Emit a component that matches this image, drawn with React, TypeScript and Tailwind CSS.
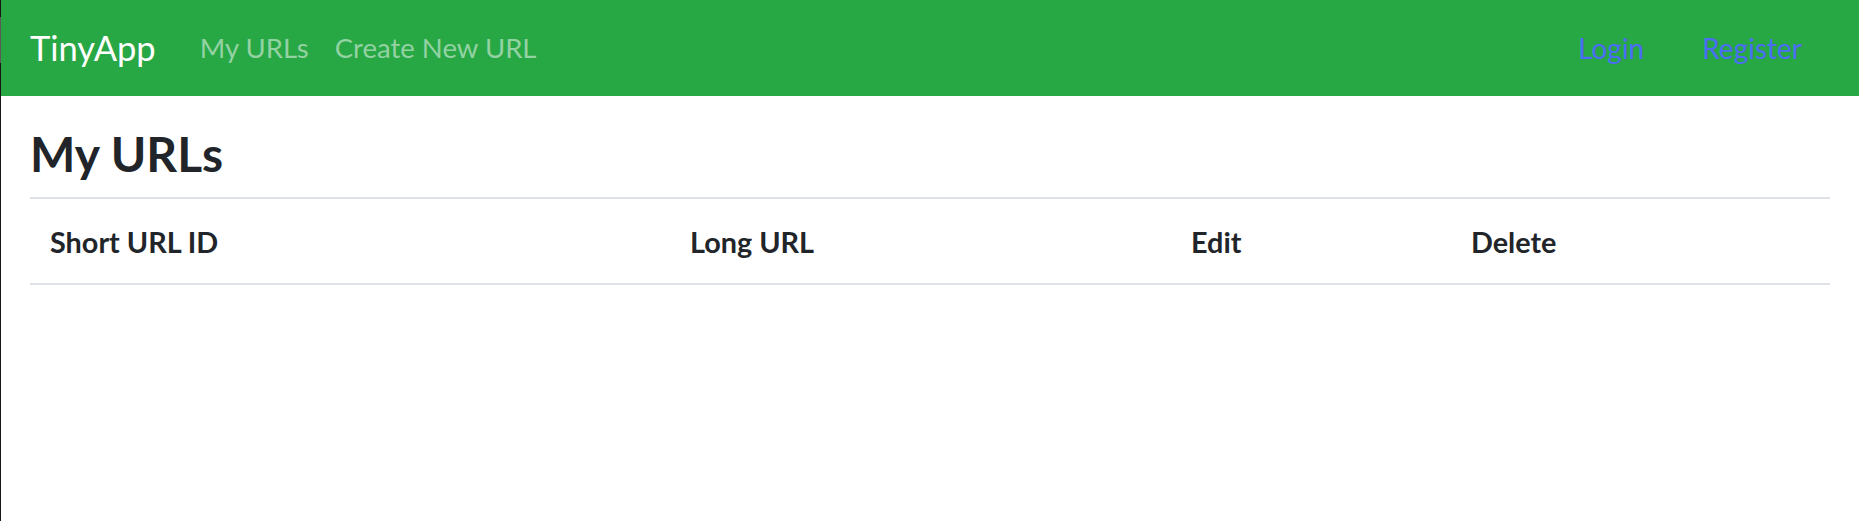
import React from 'react';

const columns = [
  { label: 'Short URL ID' },
  { label: 'Long URL' },
  { label: 'Edit' },
  { label: 'Delete' },
];

export default function App() {
  return (
    <div
      className="relative min-h-[521px] bg-white border-l border-[#161616]"
      style={{ fontFamily: 'Lato, "Open Sans", sans-serif' }}
    >
      {/* artefact on the window edge */}
      <div className="absolute -left-px top-[17px] h-[46px] w-px bg-[#5a5a5a]" />

      <nav className="h-[96px] bg-[#28a745] flex items-center px-[29px]">
        <a className="text-[34.5px] text-white leading-none mr-[44px]">TinyApp</a>
        <div className="flex items-center gap-[26px] text-[27.5px] leading-none text-[#93d2a2]">
          <a>My URLs</a>
          <a>Create New URL</a>
        </div>
        <div className="ml-auto flex items-center gap-[58px] text-[28px] leading-none text-[#4b6cf5] mr-[28px]">
          <a>Login</a>
          <a>Register</a>
        </div>
      </nav>

      <main className="px-[29px] text-[#212529]">
        <h1 className="mt-[29px] mb-[14px] text-[48px] leading-[58px] font-bold">My URLs</h1>

        <div className="border-t-2 border-b-2 border-[#dee2e6]">
          <div className="grid grid-cols-[640px_501px_280px_1fr]">
            {columns.map((c) => (
              <div key={c.label} className="px-[20px] pt-[26px] pb-[24px] text-[28.8px] leading-[34px] font-bold">
                {c.label}
              </div>
            ))}
          </div>
        </div>
      </main>
    </div>
  );
}
